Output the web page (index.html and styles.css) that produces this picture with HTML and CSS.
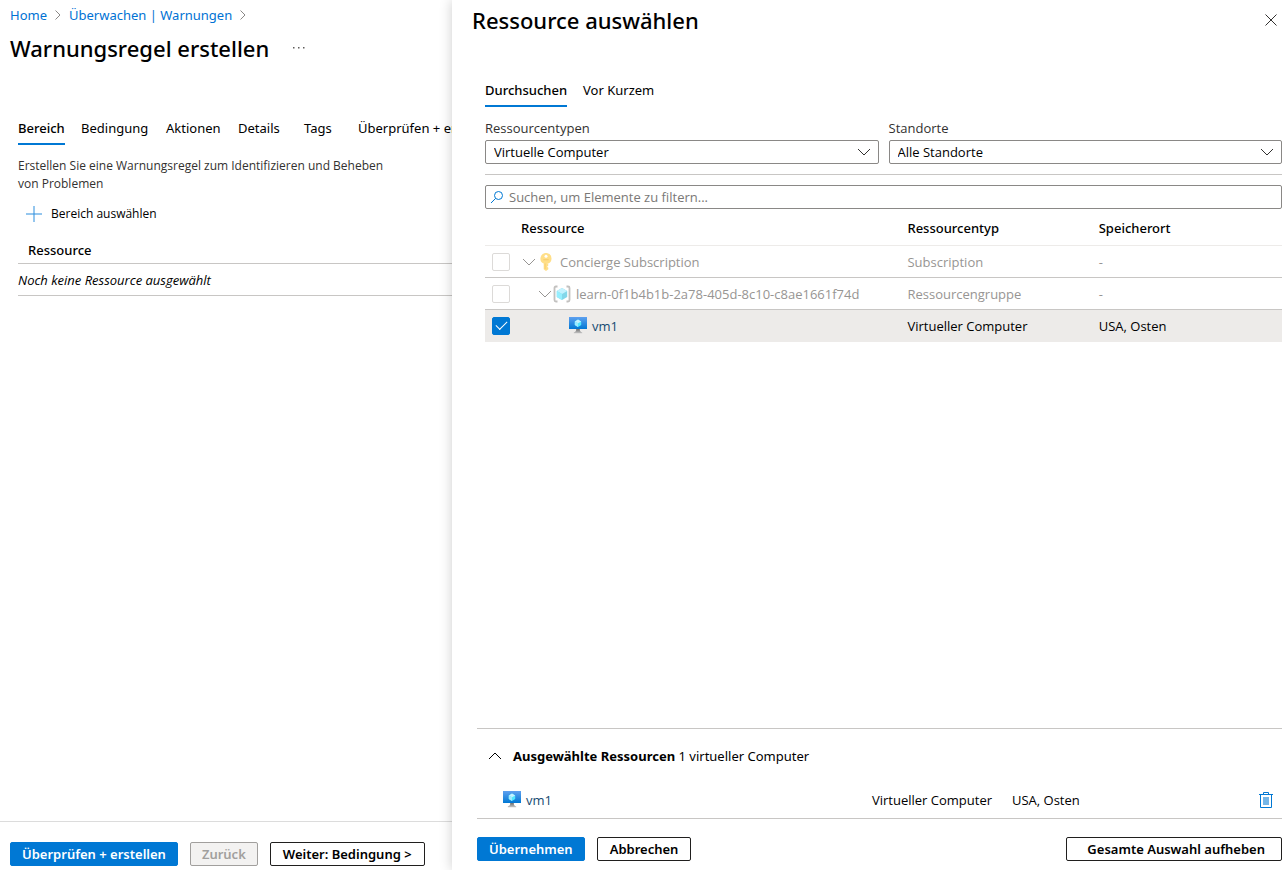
FILE: index.html
```html
<!DOCTYPE html>
<html lang="de">
<head>
<meta charset="utf-8">
<title>Warnungsregel erstellen</title>
<link rel="stylesheet" href="styles.css">
</head>
<body>
<svg class="defs" aria-hidden="true">
  <defs>
    <linearGradient id="screen" x1="0" y1="1" x2="0" y2="0"><stop offset="0" stop-color="#0078d4"/><stop offset="1" stop-color="#5ea0ef"/></linearGradient>
    <linearGradient id="stand" x1="0" y1="1" x2="0" y2="0"><stop offset="0" stop-color="#c4c4c4"/><stop offset="1" stop-color="#707070"/></linearGradient>
  </defs>
  <symbol id="chevron" viewBox="0 0 14 14"><path d="M1 4l6 6 6-6" fill="none" stroke="currentColor"/></symbol>
  <symbol id="vm" viewBox="0 0 18 18">
    <path d="M0 0h18v12H0z" fill="url(#screen)"/>
    <path d="M9 2.600l3.200 1.800v3.700L9 10 5.800 8.100V4.400z" fill="#50e6ff"/>
    <path d="M9 2.600l3.200 1.800L9 6.300 5.800 4.400z" fill="#c3f1ff"/>
    <path d="M5.800 4.400L9 6.300V10L5.800 8.100z" fill="#9cebff"/>
    <path d="M7.200 12h3.600c0 2.400.6 2.800 2.400 3.400v.8H4.800v-.8c1.800-.6 2.400-1 2.400-3.400z" fill="url(#stand)"/>
  </symbol>
</svg>
<div class="app">
  <main class="page">
    <nav class="breadcrumb" aria-label="Navigationspfad">
      <a href="#">Home</a>
      <svg class="crumb-arrow" viewBox="0 0 6 10"><path d="M.5.5L5 5 .5 9.500"/></svg>
      <a href="#">Überwachen | Warnungen</a>
      <svg class="crumb-arrow" viewBox="0 0 6 10"><path d="M.5.5L5 5 .5 9.500"/></svg>
    </nav>
    <header class="page-head">
      <h1>Warnungsregel erstellen</h1>
      <button class="plain more" type="button" aria-label="Mehr"><svg viewBox="0 0 12 2"><path d="M0 0h1.500v1.500H0zM5 0h1.500v1.500H5zM10 0h1.500v1.500H10z"/></svg></button>
    </header>
    <div class="tabs page-tabs" role="tablist">
      <button class="tab active" role="tab" type="button">Bereich</button>
      <button class="tab" role="tab" type="button">Bedingung</button>
      <button class="tab" role="tab" type="button">Aktionen</button>
      <button class="tab" role="tab" type="button">Details</button>
      <button class="tab" role="tab" type="button">Tags</button>
      <button class="tab" role="tab" type="button">Überprüfen + erstellen</button>
    </div>
    <section class="scope">
      <p class="intro">Erstellen Sie eine Warnungsregel zum Identifizieren und Beheben von Problemen</p>
      <button class="plain add" type="button"><svg viewBox="0 0 16 16"><path d="M8 0v16M0 8h16"/></svg>Bereich auswählen</button>
      <table class="scope-table">
        <thead><tr><th>Ressource</th></tr></thead>
        <tbody><tr><td>Noch keine Ressource ausgewählt</td></tr></tbody>
      </table>
    </section>
    <footer class="page-foot">
      <button class="btn primary" type="button">Überprüfen + erstellen</button>
      <button class="btn" type="button" disabled>Zurück</button>
      <button class="btn" type="button">Weiter: Bedingung &gt;</button>
    </footer>
  </main>

  <aside class="panel" aria-labelledby="panel-title">
    <header class="panel-head">
      <h2 id="panel-title">Ressource auswählen</h2>
      <button class="plain close" type="button" aria-label="Schließen"><svg viewBox="0 0 12 12"><path d="M.5.5l11 11M11.500.5l-11 11"/></svg></button>
    </header>
    <div class="panel-body">
      <div class="tabs panel-tabs" role="tablist">
        <button class="tab active" role="tab" type="button">Durchsuchen</button>
        <button class="tab" role="tab" type="button">Vor Kurzem</button>
      </div>
      <div class="filters">
        <div class="field">
          <label for="types">Ressourcentypen</label>
          <div class="select"><select id="types"><option>Virtuelle Computer</option></select><svg><use href="#chevron"/></svg></div>
        </div>
        <div class="field">
          <label for="places">Standorte</label>
          <div class="select"><select id="places"><option>Alle Standorte</option></select><svg><use href="#chevron"/></svg></div>
        </div>
      </div>
      <div class="search">
        <svg viewBox="0 0 14 14"><circle cx="8.500" cy="5.500" r="4"/><path d="M5.600 8.400L1 13"/></svg>
        <input type="search" aria-label="Suchen" placeholder="Suchen, um Elemente zu filtern...">
      </div>
      <table class="resources">
        <colgroup><col class="c-check"><col class="c-name"><col class="c-type"><col class="c-place"></colgroup>
        <thead><tr><th></th><th>Ressource</th><th>Ressourcentyp</th><th>Speicherort</th></tr></thead>
        <tbody>
          <tr class="dim">
            <td><input type="checkbox" aria-label="Concierge Subscription" disabled></td>
            <td><div class="node"><svg class="arrow"><use href="#chevron"/></svg>
              <svg class="icon" viewBox="0 0 18 18"><path d="M14.500 5.500A5.500 5.500 0 1 0 6.700 10.500V16.200L9 18l2.300-1.800v-1.400l-1.200-1.100 1.200-1.100v-1.100l-.9-.9h.9A5.500 5.500 0 0 0 14.500 5.500z" fill="#ffca3a"/><circle cx="9" cy="3.300" r="1.500" fill="#fff"/><path d="M6.300 6.300h5.400v1H6.300zM7.700 10.500h.8v5.500h-.8z" fill="#f3a80d"/></svg>
              <span>Concierge Subscription</span></div></td>
            <td>Subscription</td><td>-</td>
          </tr>
          <tr class="dim">
            <td><input type="checkbox" aria-label="learn-0f1b4b1b-2a78-405d-8c10-c8ae1661f74d" disabled></td>
            <td><div class="node level-2"><svg class="arrow"><use href="#chevron"/></svg>
              <svg class="icon" viewBox="0 0 18 18"><path d="M4.500 1.500H3Q1.500 1.500 1.500 3v12q0 1.500 1.500 1.500h1.500M13.500 1.500H15q1.500 0 1.500 1.500v12q0 1.500-1.500 1.500h-1.500" fill="none" stroke="#9a9896" stroke-width="1.800"/><path d="M9 3l5.200 3v6L9 15l-5.200-3V6z" fill="#32bedd"/><path d="M9 3l5.200 3L9 9 3.800 6z" fill="#9cebff"/><path d="M3.800 6L9 9v6l-5.200-3z" fill="#50e6ff"/></svg>
              <span>learn-0f1b4b1b-2a78-405d-8c10-c8ae1661f74d</span></div></td>
            <td>Ressourcengruppe</td><td>-</td>
          </tr>
          <tr class="selected">
            <td><input type="checkbox" aria-label="vm1" checked></td>
            <td><div class="node level-3"><svg class="icon"><use href="#vm"/></svg><a href="#">vm1</a></div></td>
            <td>Virtueller Computer</td><td>USA, Osten</td>
          </tr>
        </tbody>
      </table>
    </div>
    <section class="selection">
      <button class="plain summary" type="button"><svg><use href="#chevron"/></svg><span><b>Ausgewählte Ressourcen</b> 1 virtueller Computer</span></button>
      <div class="picked">
        <div class="node"><svg class="icon"><use href="#vm"/></svg><a href="#">vm1</a></div>
        <span>Virtueller Computer</span>
        <span>USA, Osten</span>
        <button class="plain trash" type="button" aria-label="Entfernen"><svg viewBox="0 0 14 16"><path d="M4.500 2V.5h5V2" fill="none" stroke="#0078d4"/><path d="M0 2h14v1H0z" fill="#0078d4"/><path d="M1.500 3v12.500h11V3" fill="none" stroke="#0078d4"/><path d="M4 5h6v8H4z" fill="#75b6e7"/></svg></button>
      </div>
    </section>
    <footer class="panel-foot">
      <button class="btn primary" type="button">Übernehmen</button>
      <button class="btn" type="button">Abbrechen</button>
      <button class="btn clear" type="button">Gesamte Auswahl aufheben</button>
    </footer>
  </aside>
</div>
</body>
</html>
```

FILE: styles.css
```css
* { box-sizing: border-box; }

body {
  margin: 0;
  background: #fff;
  color: #000;
  font: 13px/18px "Noto Sans", "Open Sans", sans-serif;
}

h1, h2, p { margin: 0; }
a { color: #0072d4; text-decoration: none; }
svg { flex: none; }
button, select, input { font: inherit; color: inherit; }
table { border-collapse: collapse; width: 100%; }
th, td { padding: 0; text-align: left; font-weight: 400; }
th { font-family: "Noto Sans", sans-serif; font-weight: 500; }
.defs { position: absolute; width: 0; height: 0; }

.plain { border: 0; padding: 0; background: none; display: flex; align-items: center; }

.app {
  display: grid;
  grid-template-columns: 452fr 832fr;
  min-height: 100vh;
}

/* Page behind the panel */
.page {
  display: flex;
  flex-direction: column;
  min-width: 0;
  overflow: hidden;
}

.breadcrumb {
  display: flex;
  align-items: center;
  gap: 8px;
  height: 30px;
  padding-left: 10px;
}
.crumb-arrow { width: 6px; height: 10px; fill: none; stroke: #8a8886; }

.page-head {
  display: flex;
  align-items: center;
  gap: 24px;
  height: 36px;
  padding-left: 10px;
}
h1, h2 { font-size: 22px; line-height: 32px; font-weight: 500; white-space: nowrap; }
.more svg { width: 12px; height: 2px; fill: #605e5c; }

.tabs { display: flex; gap: 16px; }
.tab {
  border: 0;
  border-bottom: 2px solid transparent;
  padding: 0;
  background: none;
  text-align: left;
  white-space: nowrap;
}
.tab.active { border-color: #0078d4; font-weight: 500; }
.page-tabs {
  display: grid;
  grid-template-columns: 47px 69px 56px 50px 38px auto;
  height: 33px;
  margin-top: 46px;
  padding-left: 18px;
}

.scope, .filters, .search, .resources, .picked { font-family: "Open Sans", "Noto Sans", sans-serif; }

.scope { flex: 1; padding: 12px 0 0 18px; }
.intro { max-width: 380px; color: #323130; font-size: 12px; }
.add { gap: 9px; height: 24px; margin-top: 9px; padding-left: 8px; font-size: 12px; }
.add svg { width: 16px; height: 16px; stroke: #2b8ddd; }

.scope-table { margin-top: 11px; }
.scope-table th { height: 26px; padding-left: 10px; border-bottom: 1px solid #c8c6c4; }
.scope-table td { height: 32px; padding-top: 2px; border-bottom: 1px solid #c8c6c4; font-style: italic; }

.page-foot {
  display: flex;
  gap: 12px;
  padding: 20px 10px 4px;
  border-top: 1px solid #dcdcdc;
}

.btn {
  height: 24px;
  padding: 0 12px;
  border: 1px solid #201f1e;
  border-radius: 2px;
  background: #fff;
  font-weight: 600;
  line-height: 20px;
  white-space: nowrap;
}
.btn.primary { padding: 0 11px; border-color: #0078d4; background: #0078d4; color: #fff; }
.btn:disabled { padding: 0 11px; border-color: #a19f9d; background: #f3f2f1; color: #a19f9d; }

/* Resource picker */
.panel {
  z-index: 1;
  display: flex;
  flex-direction: column;
  min-width: 0;
  background: #fff;
  box-shadow: 0 0 12px rgba(0, 0, 0, .2);
}

.panel-head {
  display: flex;
  align-items: center;
  justify-content: space-between;
  height: 40px;
  padding: 0 7px 0 20px;
}
.close svg { width: 12px; height: 12px; stroke: #323130; fill: none; }

.panel-body { flex: 1; padding: 34px 2px 0 33px; }
.panel-tabs { height: 33px; }

.filters {
  display: grid;
  grid-template-columns: 1fr 1fr;
  gap: 10px;
  padding: 12px 0 10px;
  border-bottom: 1px solid #c8c6c4;
}
.field label { display: block; margin-bottom: 3px; color: #323130; }
.select { display: grid; align-items: center; }
.select select, .select svg { grid-area: 1 / 1; }
.select select {
  appearance: none;
  width: 100%;
  height: 24px;
  padding: 0 8px;
  border: 1px solid #8a8886;
  border-radius: 2px;
  background: #fff;
}
.select svg { width: 14px; height: 14px; margin-right: 8px; justify-self: end; color: #323130; pointer-events: none; }

.search {
  display: flex;
  align-items: center;
  gap: 5px;
  height: 24px;
  margin-top: 10px;
  padding: 0 4px;
  border: 1px solid #8a8886;
  border-radius: 2px;
}
.search svg { width: 14px; height: 14px; fill: none; stroke: #0078d4; }
.search input { flex: 1; min-width: 0; border: 0; padding: 0; outline: 0; background: none; }
.search input::placeholder { color: #7a7876; opacity: 1; }

.resources { table-layout: fixed; }
.c-check { width: 36px; }
.c-type { width: 24%; }
.c-place { width: 23%; }
.resources th { height: 36px; padding-top: 2px; border-bottom: 1px solid #edebe9; }
.resources td { height: 32px; padding-top: 1px; border-bottom: 1px solid #c8c6c4; }
.resources .dim { color: #979593; }
.resources .dim svg.icon { opacity: .6; }
.resources .selected { background: #edebe9; }
.resources .selected td { border-bottom-color: #edebe9; }

.resources input {
  appearance: none;
  display: grid;
  place-items: center;
  width: 18px;
  height: 18px;
  margin: 0 0 0 7px;
  border: 1px solid #dcdad8;
  border-radius: 2px;
}
.resources input:checked { border-color: #0078d4; background: #0078d4; }
.resources input:checked::before {
  content: "";
  width: 10px;
  height: 5px;
  margin-bottom: 3px;
  border: solid #fff;
  border-width: 0 0 1px 1px;
  rotate: -45deg;
}

.node { display: flex; align-items: center; white-space: nowrap; }
.node a { margin-left: 5px; color: #164a72; }
.node .arrow { width: 14px; height: 14px; margin: 0 1px; }
.node .icon { width: 18px; height: 18px; }
.node span { margin-left: 5px; }
.level-2 { padding-left: 16px; }
.level-3 { padding-left: 48px; }

.selection {
  margin: 0 2px 0 25px;
  border-top: 1px solid #c8c6c4;
  border-bottom: 1px solid #c8c6c4;
}
.summary { gap: 11px; height: 24px; margin-top: 15px; padding-left: 11px; }
.summary svg { width: 14px; height: 14px; rotate: 180deg; }
.picked {
  display: grid;
  grid-template-columns: 1fr 140px 245px 16px;
  align-items: center;
  height: 36px;
  margin-top: 14px;
  padding: 0 9px 0 26px;
}
.trash { justify-self: end; }
.trash svg { width: 14px; height: 16px; }

.panel-foot {
  display: flex;
  gap: 12px;
  padding: 18px 2px 9px 25px;
}
.clear { margin-left: auto; padding: 0 16px 0 20px; }
```
